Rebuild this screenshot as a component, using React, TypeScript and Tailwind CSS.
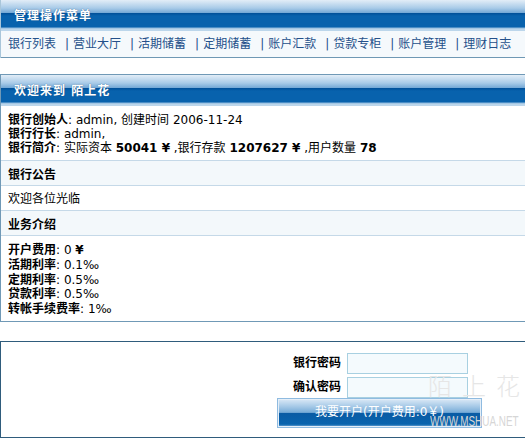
import React from "react";

const font = "font-['DejaVu_Sans','Noto_Sans_CJK_SC',sans-serif]";

function Bar({ title }: { title: string }) {
  return (
    <div className="h-[31px] pl-[13px] pt-[9px] bg-[linear-gradient(to_bottom,#e2edf7_0px,#a9cbe8_8px,#72a7d5_13px,#004f98_13px,#0862ad_16px,#0862ad_27px,#8cb8dd_28px,#bcd6eb_29px,#bcd6eb_31px)]">
      <span className="block text-[12px] leading-[15px] font-bold tracking-[1px] text-white [text-shadow:0_0_1px_#1c4f82]">
        {title}
      </span>
    </div>
  );
}

const menu = ["银行列表", "营业大厅", "活期储蓄", "定期储蓄", "账户汇款", "贷款专柜", "账户管理", "理财日志"];

function Line({ label, children }: { label: string; children?: React.ReactNode }) {
  return (
    <div>
      <b>{label}</b>: {children}
    </div>
  );
}

export default function App() {
  return (
    <div className={`${font} relative w-[525px] h-[439px] overflow-hidden bg-white text-[12px] text-black`}>
      {/* top menu panel */}
      <div className="border-l border-[#a9c6da]">
        <Bar title="管理操作菜单" />
        <div className="h-[27px] flex items-center pl-[7px] bg-[#f5f9fc] border-b border-[#6f98b4] text-[#24508a] leading-[15px]">
          {menu.map((m, i) => (
            <span key={m} className="flex items-center">
              <span className="w-[48px] whitespace-nowrap">{m}</span>
              {i < menu.length - 1 && <span className="ml-[9px] mr-[4px] text-[#24508a]">|</span>}
            </span>
          ))}
        </div>
      </div>

      {/* bank info panel */}
      <div className="mt-[16px] border-t border-l border-b border-[#7099b6]">
        <Bar title="欢迎来到 陌上花" />
        <div className="pl-[7px] pt-[7px] pb-[5px] leading-[14px] border-b border-[#c5d9e8]">
          <Line label="银行创始人">admin, 创建时间 2006-11-24</Line>
          <Line label="银行行长">admin,</Line>
          <Line label="银行简介">
            实际资本 <b>50041 ¥</b> ,银行存款 <b>1207627 ¥</b> ,用户数量 <b>78</b>
          </Line>
        </div>
        <div className="pl-[7px] pt-[7px] pb-[3px] leading-[14px] font-bold bg-[#f3f8fb] border-b border-[#c5d9e8]">
          银行公告
        </div>
        <div className="pl-[7px] pt-[6px] pb-[4px] leading-[14px] border-b border-[#c5d9e8]">欢迎各位光临</div>
        <div className="pl-[7px] pt-[7px] pb-[3px] leading-[14px] font-bold bg-[#f3f8fb] border-b border-[#c5d9e8]">
          业务介绍
        </div>
        <div className="pl-[7px] pt-[7px] pb-[4px] leading-[14.75px]">
          <Line label="开户费用">0 <b>¥</b></Line>
          <Line label="活期利率">0.1‰</Line>
          <Line label="定期利率">0.5‰</Line>
          <Line label="贷款利率">0.5‰</Line>
          <Line label="转帐手续费率">1‰</Line>
        </div>
      </div>

      {/* open account form */}
      <div className="mt-[19px] border-t border-l border-b border-[#2f5c7c] pt-[11px] pb-[9px]">
        <div className="ml-[276px] w-[205px] flex flex-col">
          <div className="flex items-center">
            <span className="w-[64px] text-right font-bold">银行密码</span>
            <input className="ml-[6px] w-[121px] h-[21px] border border-[#a8d0e1] bg-[#f4fafd] outline-none" type="password" />
          </div>
          <div className="flex items-center mt-[3px]">
            <span className="w-[64px] text-right font-bold">确认密码</span>
            <input className="ml-[6px] w-[121px] h-[21px] border border-[#a8d0e1] bg-[#f4fafd] outline-none" type="password" />
          </div>
          <button className="w-[205px] h-[30px] border border-[#8fbbe0] text-white text-[12px] leading-[15px] bg-[linear-gradient(to_bottom,#dbe9f6_0%,#a9cbe8_25%,#78acd8_48%,#0a5ba4_50%,#0864ae_90%,#7fb0da_100%)] [box-shadow:inset_0_0_0_1px_#e4eef8]">
            我要开户(开户费用:0￥)
          </button>
        </div>
      </div>

      {/* site watermark */}
      <div className="pointer-events-none absolute left-[428px] top-[370px] flex gap-[10px] text-[24px] leading-[30px] text-[#e6e6e6] font-['Noto_Sans_CJK_SC',sans-serif] font-light">
        <span>陌</span>
        <span>上</span>
        <span>花</span>
      </div>
      <div className="pointer-events-none absolute left-[430px] top-[413px] w-[88px] text-[15px] leading-[16px] text-[#d6d6d6] font-['Liberation_Sans',sans-serif] origin-left scale-x-[0.66] whitespace-nowrap">
        WWW.MSHUA.NET
      </div>
    </div>
  );
}
